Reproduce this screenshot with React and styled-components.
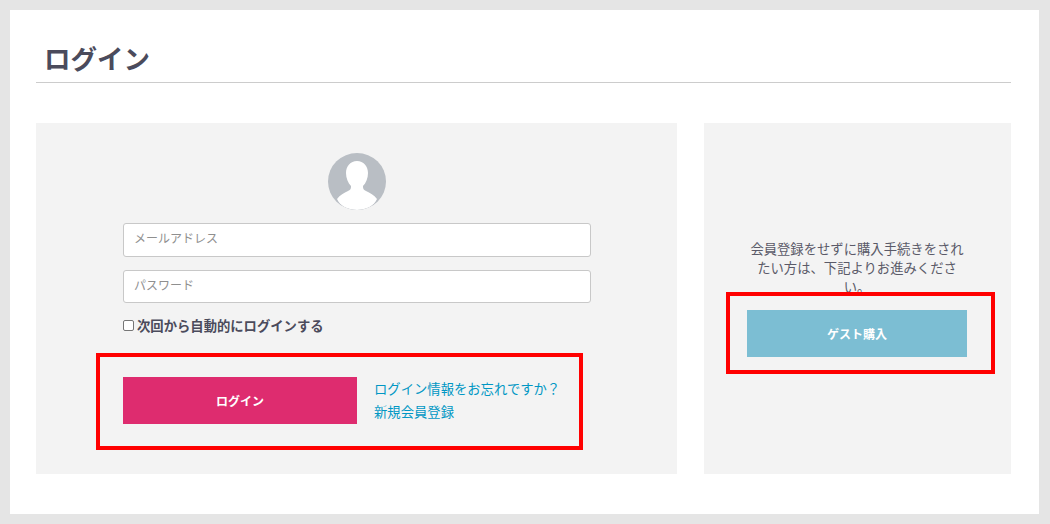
import React from 'react';
import styled, { createGlobalStyle } from 'styled-components';

const JP = `"Liberation Sans", "Noto Sans CJK JP", sans-serif`;

const Global = createGlobalStyle`
  html, body { margin: 0; padding: 0; background: #e5e5e5; }
  body { font-family: ${JP}; }
  * { box-sizing: border-box; }
`;

const Frame = styled.div`
  width: 1050px;
  height: 524px;
  padding: 10px 11px 10px 10px;
  background: #e5e5e5;
  overflow: hidden;
`;
const Sheet = styled.main`
  height: 504px;
  background: #fff;
  padding: 31px 28px 0 26px;
`;
const Title = styled.h1`
  margin: 0;
  height: 42px;
  padding-left: 8px;
  border-bottom: 1px solid #ccc;
  font-size: 26.5px;
  line-height: 39px;
  font-weight: 700;
  color: #4b4b5c;
`;
const Columns = styled.div`
  display: flex;
  gap: 27px;
  margin-top: 40px;
`;
const Panel = styled.section`
  position: relative;
  height: 351px;
  width: ${(p) => p.$width}px;
  background: #f3f3f3;
`;
const LoginBody = styled.div`
  padding: 30px 86px 0 87px;
  display: flex;
  flex-direction: column;
`;
const AvatarWrap = styled.div`
  display: flex;
  justify-content: center;
  height: 57px;
  margin-bottom: 13px;
`;
const Field = styled.input`
  display: block;
  width: 468px;
  height: ${(p) => p.$h}px;
  margin-bottom: 13px;
  padding: 0 10px 2px;
  background: #fff;
  border: 1px solid #c8c8c8;
  border-radius: 3px;
  font-family: ${JP};
  font-size: 12px;
  &::placeholder { color: #8f8f8f; opacity: 1; }
`;
const Remember = styled.label`
  display: flex;
  align-items: center;
  height: 20px;
  margin-top: -1px;
  font-size: 13.33px;
  font-weight: 700;
  color: #4b4b5c;
`;
const Check = styled.span`
  width: 11px;
  height: 11px;
  margin-right: 3px;
  background: #fff;
  border: 1px solid #767676;
  border-radius: 2px;
`;
const Actions = styled.div`
  display: flex;
  align-items: center;
  gap: 17px;
  margin-top: 42px;
`;
const Button = styled.a`
  display: flex;
  align-items: center;
  justify-content: center;
  flex: none;
  width: ${(p) => p.$width}px;
  height: 47px;
  background: ${(p) => p.$color};
  color: #fff;
  font-size: 12px;
  font-weight: 700;
`;
const Links = styled.div`
  display: flex;
  flex-direction: column;
  gap: 5px;
  padding-top: 2px;
`;
const TextLink = styled.a`
  font-size: 13.33px;
  line-height: 18px;
  color: #0097c4;
`;
const GuestBody = styled.div`
  display: flex;
  flex-direction: column;
  align-items: center;
  padding: 117px 1px 0 0;
`;
const GuestText = styled.p`
  margin: 0;
  width: 220px;
  height: 70px;
  font-size: 13.33px;
  line-height: 19px;
  color: #5a5a68;
  text-align: center;
`;
const Marker = styled.div`
  position: absolute;
  left: ${(p) => p.$x}px;
  top: ${(p) => p.$y}px;
  width: ${(p) => p.$w}px;
  height: ${(p) => p.$h}px;
  border: 4px solid #ff0000;
  pointer-events: none;
`;

const Avatar = () => (
  <svg width="58" height="57" viewBox="0 0 58 57">
    <defs>
      <clipPath id="round"><ellipse cx="29" cy="28.5" rx="29" ry="28.5" /></clipPath>
    </defs>
    <ellipse cx="29" cy="28.5" rx="29" ry="28.5" fill="#b9bec4" />
    <g clipPath="url(#round)" fill="#fff">
      <path d="M29 8c-6.500 0-11 5-11 12 0 5 2 10 5 13v1c0 2-1 3-3 4-4 2-8 4-11 8 3 7 11 11 20 11s17-4 20-11c-3-4-7-6-11-8-2-1-3-2-3-4v-1c3-3 5-8 5-13 0-7-4.500-12-11-12z" />
    </g>
  </svg>
);

export default function App() {
  return (
    <Frame>
      <Global />
      <Sheet>
        <Title>ログイン</Title>
        <Columns>
          <Panel $width={641}>
            <LoginBody>
              <AvatarWrap><Avatar /></AvatarWrap>
              <Field $h={34} placeholder="メールアドレス" />
              <Field $h={33} placeholder="パスワード" />
              <Remember><Check />次回から自動的にログインする</Remember>
              <Actions>
                <Button $width={234} $color="#de2c6f">ログイン</Button>
                <Links>
                  <TextLink>ログイン情報をお忘れですか？</TextLink>
                  <TextLink>新規会員登録</TextLink>
                </Links>
              </Actions>
            </LoginBody>
            <Marker $x={60} $y={230} $w={487} $h={97} />
          </Panel>
          <Panel $width={307}>
            <GuestBody>
              <GuestText>会員登録をせずに購入手続きをされたい方は、下記よりお進みください。</GuestText>
              <Button $width={220} $color="#7cbed3">ゲスト購入</Button>
            </GuestBody>
            <Marker $x={22} $y={169} $w={269} $h={82} />
          </Panel>
        </Columns>
      </Sheet>
    </Frame>
  );
}
